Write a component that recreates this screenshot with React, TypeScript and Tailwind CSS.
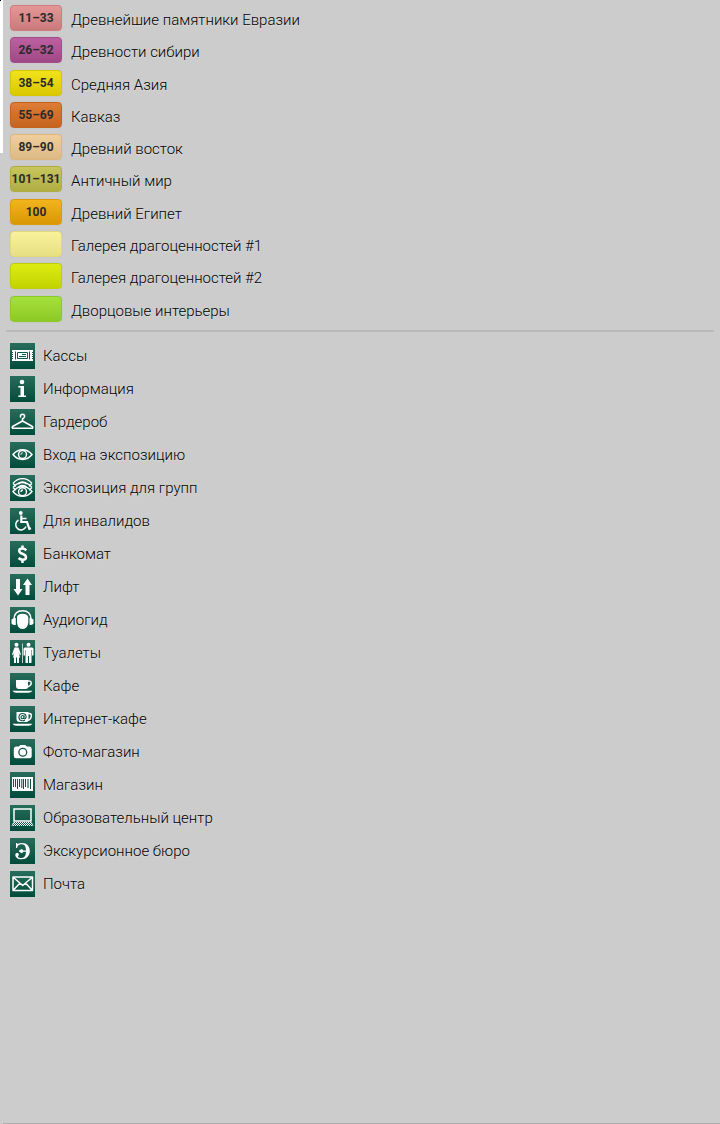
import type { ReactNode } from "react";

type Hall = { label: string; rooms?: string; swatch: string };

const halls: Hall[] = [
  { label: "Древнейшие памятники Евразии", rooms: "11–33", swatch: "from-[#e49797] to-[#cb7a7c] border-[#ce7b7d]" },
  { label: "Древности сибири", rooms: "26–32", swatch: "from-[#bd60a1] to-[#a04886] border-[#a34c8b]" },
  { label: "Средняя Азия", rooms: "38–54", swatch: "from-[#f2e21a] to-[#d8c900] border-[#d6c500]" },
  { label: "Кавказ", rooms: "55–69", swatch: "from-[#de7d35] to-[#c56320] border-[#c4611f]" },
  { label: "Древний восток", rooms: "89–90", swatch: "from-[#f0cf9d] to-[#dcb985] border-[#e0b57c]" },
  { label: "Античный мир", rooms: "101–131", swatch: "from-[#c7c65d] to-[#b0ae43] border-[#b0ac3f]" },
  { label: "Древний Египет", rooms: "100", swatch: "from-[#f2b41c] to-[#d99803] border-[#dc9b0b]" },
  { label: "Галерея драгоценностей #1", swatch: "from-[#faf29a] to-[#e7df82] border-[#e4da7c]" },
  { label: "Галерея драгоценностей #2", swatch: "from-[#dcec12] to-[#c2d300] border-[#bfce08]" },
  { label: "Дворцовые интерьеры", swatch: "from-[#a6e03c] to-[#8dc925] border-[#8bca26]" },
];

const services: { label: string; icon: ReactNode }[] = [
  {
    label: "Кассы",
    icon: (
      <>
        <path fill="#fff" d="M2 7h21v2h-1v1h1v1h-1v1h1v1h-1v1h1v1h-1v1h1v2H2v-2h1v-1H2v-1h1v-1H2v-1h1v-1H2v-1h1V9H2z" />
        <path fill="none" stroke="#12594a" d="M5.500 8.500v8M19.500 8.500v8M7.500 9.500h10v6h-10zM12 11.500h4M9 13.500h7" />
      </>
    ),
  },
  {
    label: "Информация",
    icon: (
      <g fill="#fff">
        <circle cx="12" cy="6" r="2.300" />
        <path d="M8.300 10H14v9.500h2V21H8.300v-1.500h2.200v-8H8.300z" />
      </g>
    ),
  },
  {
    label: "Гардероб",
    icon: (
      <path fill="none" stroke="#fff" strokeWidth="1.600" strokeLinecap="round" strokeLinejoin="round" d="M10.500 8Q10.200 5.300 12.500 5.300T14.600 7.500Q14.500 8.700 12.500 10V12L2.500 17.500Q1.500 19.300 3.500 19.300H21.500Q23.500 19.300 22.500 17.500L12.500 12" />
    ),
  },
  {
    label: "Вход на экспозицию",
    icon: (
      <>
        <path fill="none" stroke="#fff" strokeWidth="1.500" d="M3 12.500C8 6 17 6 22 12.500C17 19 8 19 3 12.500Z" />
        <circle cx="12.500" cy="12.500" r="4" fill="none" stroke="#fff" strokeWidth="1.500" />
        <path fill="none" stroke="#fff" d="M10.800 12.800Q10.800 10.800 12.800 10.800" />
      </>
    ),
  },
  {
    label: "Экспозиция для групп",
    icon: (
      <g fill="none" stroke="#fff" strokeWidth="1.400">
        <path d="M3 8.500C8 2 17 2 22 8.500M3 12.500C8 6 17 6 22 12.500M3 8.500l3 2.700M22 8.500l-3 2.700M3 12.500l3 2.700M22 12.500l-3 2.700" />
        <path d="M3 16.500C8 10 17 10 22 16.500C17 23 8 23 3 16.500Z" />
        <circle cx="12.500" cy="16.800" r="4" />
        <path d="M8.500 9.300C9.500 6.200 15.500 6.200 16.500 9.300M8.500 12.800C9.500 9.700 15.500 9.700 16.500 12.800M11 17q0-2 2-2" />
      </g>
    ),
  },
  {
    label: "Для инвалидов",
    icon: (
      <>
        <circle cx="10.800" cy="5" r="1.900" fill="#fff" />
        <path fill="none" stroke="#fff" strokeWidth="2.200" d="M11.300 7.500V14H17l2.300 6.800 1.700-.6" />
        <path fill="none" stroke="#fff" strokeWidth="1.500" d="M12 10.500h4.500M8.500 12A5.300 5.300 0 1 0 16 18.500" />
      </>
    ),
  },
  {
    label: "Банкомат",
    icon: (
      <path fill="none" stroke="#fff" strokeWidth="2.500" d="M16.300 9.300Q14.500 7.500 12.500 7.500Q9.200 7.500 9.200 9.700Q9.200 11.600 12.400 12.700Q16 14 16 16.200Q16 18.700 12.700 18.700Q10.300 18.700 8.600 17M12.500 4.500v3.500M12.500 18v4" />
    ),
  },
  {
    label: "Лифт",
    icon: <path fill="#fff" d="M6 5h4v10h2.500L8 21.500 3.500 15H6zM15.500 21h4V11H22L17.500 4.500 13 11h2.500z" />,
  },
  {
    label: "Аудиогид",
    icon: (
      <>
        <path fill="#fff" d="M7 10Q8 6.800 12.500 6.800T18.300 10V16Q17 22 12.500 22T7 16zM1.500 12.500Q3 11 5.800 11v7Q3 18.500 1.500 16.500zM23.500 12.500Q22 11 19.500 11v7Q22 18.500 23.500 16.500z" />
        <path fill="none" stroke="#fff" strokeWidth="1.500" d="M4 12Q4.500 3.800 12.500 3.800T21 12" />
      </>
    ),
  },
  {
    label: "Туалеты",
    icon: (
      <>
        <g fill="#fff">
          <circle cx="6.500" cy="4.800" r="2" />
          <circle cx="18.500" cy="4.800" r="2" />
          <path d="M4.500 7.500h4l2.500 7-1 .7L8.500 12 10 17.500H9V23H7v-5.500H6V23H4v-5.500H3L4.500 12 3 15.200l-1-.7zM15 7.500h7q1.500 0 1.500 1.500v6.500H22V10h-.5v13H19v-7h-1v7h-2.500V10H15v5.500h-1.500V9Q13.500 7.500 15 7.500z" />
        </g>
        <path stroke="#b9d1cb" d="M12.500 3.500V23" />
      </>
    ),
  },
  {
    label: "Кафе",
    icon: (
      <>
        <path fill="#fff" d="M6 7h12V14q0 2-2 2H9Q6 16 6 13zM2.500 17.800h20q-1.500 2-4 2h-12q-3 0-4-2z" />
        <path fill="none" stroke="#fff" strokeWidth="1.500" d="M17.500 8h1.500Q21.500 8 21.200 10.500T17 14" />
      </>
    ),
  },
  {
    label: "Интернет-кафе",
    icon: (
      <>
        <path fill="#fff" d="M6.500 6h12V14q0 2-2 2H9.500Q6.500 16 6.500 13zM2.500 17.800h20q-1.500 2-4 2h-12q-3 0-4-2z" />
        <path fill="none" stroke="#fff" strokeWidth="1.500" d="M18 7.500h1.500Q21.700 7.500 21.300 10.500T17.500 14.500" />
        <path fill="none" stroke="#12594a" strokeWidth="1.100" d="M15 14.200Q12 15.500 9.700 13.700Q8 11 9.800 8.500Q12.500 6.500 15.300 8.500Q17 11 15.300 12.600Q13.700 13 14 11.500L14.400 9.500M14 11Q13.500 12.900 12 12.700Q10.500 12 11.300 10.300Q12.700 8.800 14 10.300" />
      </>
    ),
  },
  {
    label: "Фото-магазин",
    icon: (
      <>
        <path fill="#fff" d="M6 7.500h3L10.300 6h5L16.700 7.500h2.800Q21.700 7.500 21.700 10v7q0 2.200-2 2.200h-13.700q-2.200 0-2.200-2.200v-7q0-2.500 2.200-2.500z" />
        <circle cx="12.800" cy="13.300" r="3.900" fill="none" stroke="#12594a" strokeWidth="1.300" />
      </>
    ),
  },
  {
    label: "Магазин",
    icon: (
      <>
        <path fill="#fff" d="M2 5h21v14H2z" />
        <path stroke="#164f43" d="M3.500 7v8M5.500 7v8M7.500 7v10M9.500 7v8M13.500 7v10M15.500 7v8M20.500 7v10" />
        <path stroke="#4d8075" strokeWidth="1.500" d="M11.700 7v9M18 7v9" />
      </>
    ),
  },
  {
    label: "Образовательный центр",
    icon: (
      <>
        <path fill="none" stroke="#fff" strokeWidth="1.500" d="M4 4h17v12H4z" />
        <path fill="none" stroke="#fff" strokeDasharray="1 1" d="M4 17.500h18M3 18.500h19M4 19.500h18M3 20.500h20" />
        <path fill="none" stroke="#fff" strokeWidth="0.800" d="M3.500 17.500 2 21M21.500 17.500 23 21" />
      </>
    ),
  },
  {
    label: "Экскурсионное бюро",
    icon: (
      <g fill="#fff">
        <path d="M12 5C17 5 19.800 8.500 19.800 13S17 21.300 11.500 21.300C7.500 21.300 5.300 19.300 5.300 16.800C5.300 14.500 8.500 14.300 8.800 16.300C9 17.800 7.800 17.800 8 18.700C8.500 19.800 10 20 11.500 20C15 20 16 17 16 13S15 6.300 11.500 6.300C9 6.300 7.300 7.800 7 10H6V5H7L7.500 6Q9.500 5 12 5Z" />
        <path d="M9 12.500Q10.500 12.300 11 11Q13 11 13.500 12.500H16V13.800H13.500Q13 15.200 11 15.200Q10.500 13.800 9 13.800Z" />
      </g>
    ),
  },
  {
    label: "Почта",
    icon: (
      <path fill="none" stroke="#fff" strokeWidth="1.500" strokeLinejoin="round" d="M3 6h19.500v13.500H3zM3.500 6.500l9.200 8 9.300-8M3.500 19l6.500-7M22 19l-6.500-7" />
    ),
  },
];

const labelText = "text-[15px] font-light leading-5 text-black [text-shadow:0_1px_1px_#dddddd]";

export default function App() {
  return (
    <div className="relative min-h-screen bg-[#cccccc] font-[Roboto,sans-serif] text-[#2b2b2b]">
      <div aria-hidden="true" className="absolute left-0 top-0 h-[153px] w-[3px] bg-white">
        <div className="size-px bg-black" />
      </div>
      <main className="flex min-h-screen flex-col px-1.5 pt-[5px]">
        <ul className="grid h-[323px] grid-rows-10 pl-1">
          {halls.map((hall) => (
            <li key={hall.label} className="flex items-start gap-[9px]">
              <span
                className={`flex h-[26px] w-[52px] shrink-0 justify-center whitespace-nowrap rounded-[4px] border bg-linear-to-b text-[12px] font-bold leading-[25px] shadow-[0_0_1px_#88888860] ${hall.swatch}`}
              >
                {hall.rooms}
              </span>
              <span className={`pt-[5px] ${labelText}`}>{hall.label}</span>
            </li>
          ))}
        </ul>
        <hr className="mt-0.5 border-t-2 border-[#b9b9b9]" />
        <ul className="flex flex-col gap-[7px] pl-1 pt-[11px]">
          {services.map((service) => (
            <li key={service.label} className="flex items-center gap-2">
              <svg
                viewBox="0 0 25 26"
                aria-hidden="true"
                className="h-[26px] w-[25px] shrink-0 bg-linear-to-b from-[#276d5c] to-[#004c3b]"
              >
                {service.icon}
              </svg>
              <span className={labelText}>{service.label}</span>
            </li>
          ))}
        </ul>
      </main>
      <div aria-hidden="true" className="absolute bottom-0 left-[3px] right-0 h-px bg-[#adadad]" />
    </div>
  );
}
